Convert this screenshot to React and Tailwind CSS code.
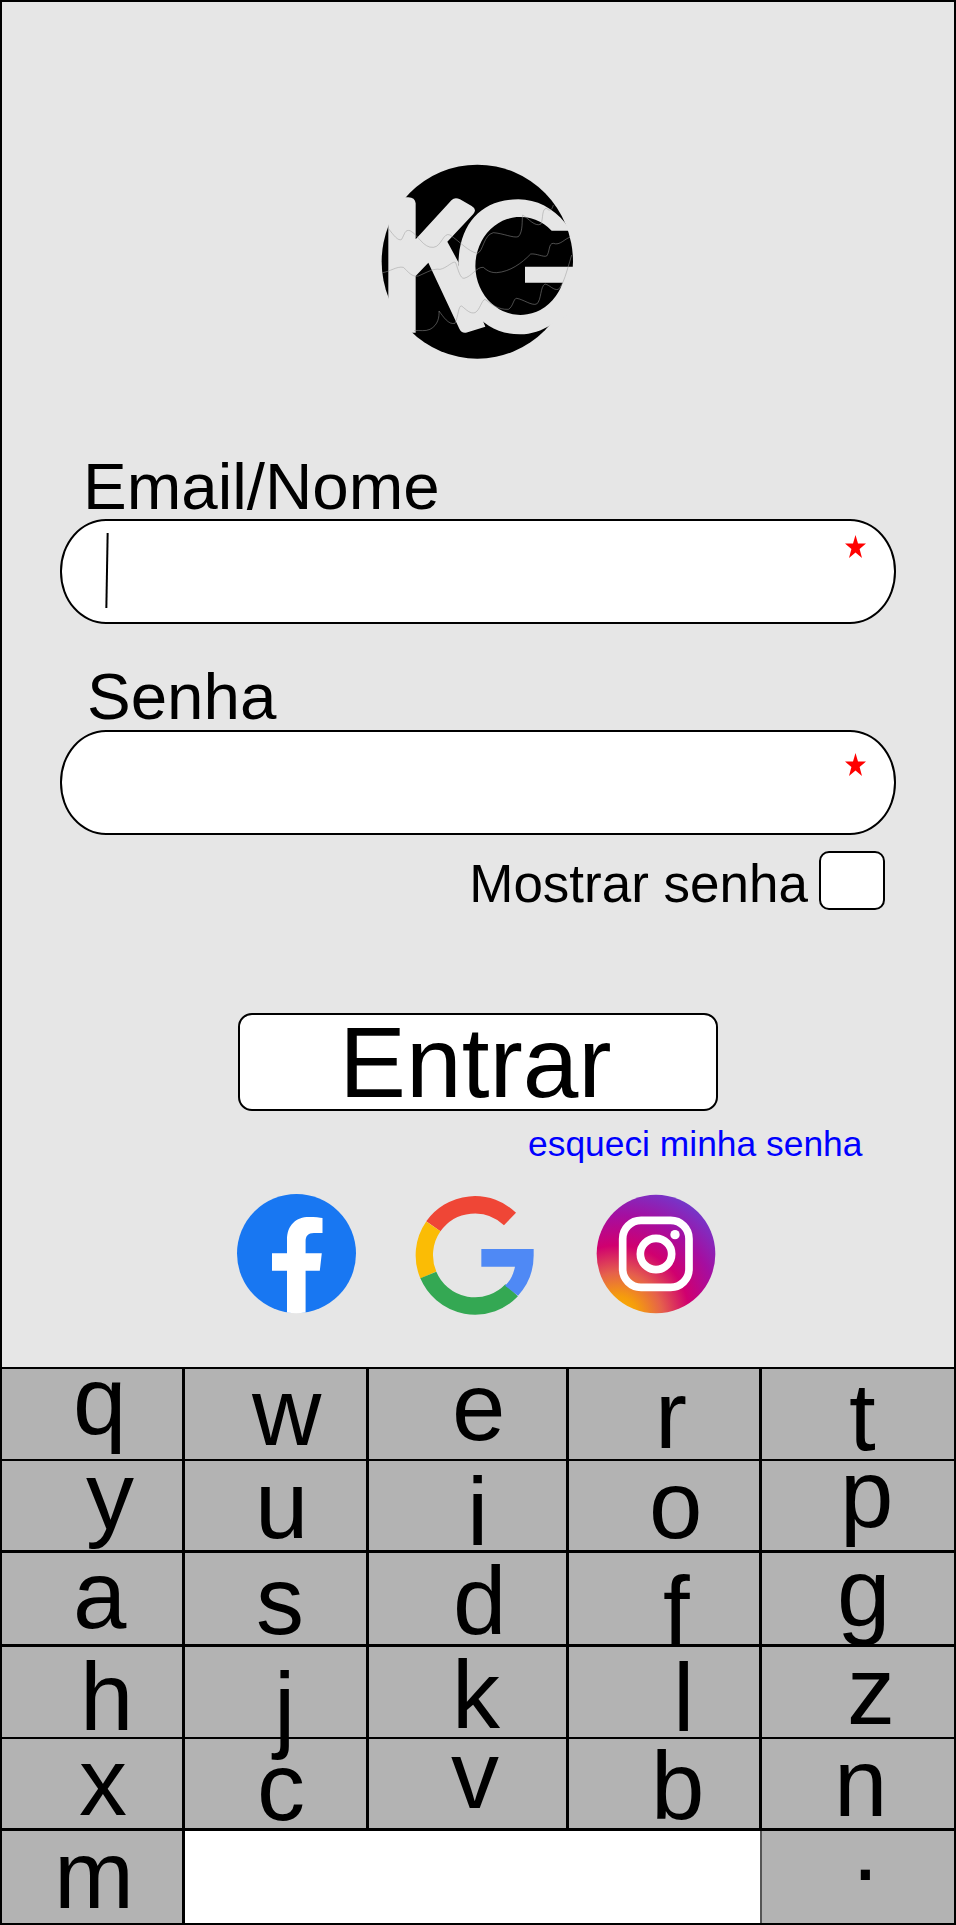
import React from "react";

const keys = [
  [
    { k: "q", c: "ml-[71px] -mt-[16px]" },
    { k: "w", c: "ml-[67px] -mt-[5px]" },
    { k: "e", c: "ml-[83px] -mt-[10px]" },
    { k: "r", c: "ml-[86px] -mt-[2px]" },
    { k: "t", c: "ml-[87px] mt-[0px]" },
  ],
  [
    { k: "y", c: "ml-[84px] -mt-[13px]" },
    { k: "u", c: "ml-[70px] -mt-[4px]" },
    { k: "i", c: "ml-[98px] mt-[3px]" },
    { k: "o", c: "ml-[80px] -mt-[4px]" },
    { k: "p", c: "ml-[78px] -mt-[15px]" },
  ],
  [
    { k: "a", c: "ml-[71px] -mt-[6px]" },
    { k: "s", c: "ml-[71px] mt-[0px]" },
    { k: "d", c: "ml-[84px] mt-[0px]" },
    { k: "f", c: "ml-[94px] mt-[10px]" },
    { k: "g", c: "ml-[75px] -mt-[8px]" },
  ],
  [
    { k: "h", c: "ml-[78px] mt-[2px]" },
    { k: "j", c: "ml-[89px] mt-[12px]" },
    { k: "k", c: "ml-[83px] mt-[0px]" },
    { k: "l", c: "ml-[104px] mt-[3px]" },
    { k: "z", c: "ml-[85px] -mt-[4px]" },
  ],
  [
    { k: "x", c: "ml-[77px] -mt-[5px]" },
    { k: "c", c: "ml-[72px] mt-[0px]" },
    { k: "v", c: "ml-[82px] -mt-[12px]" },
    { k: "b", c: "ml-[82px] -mt-[1px]" },
    { k: "n", c: "ml-[72px] -mt-[4px]" },
  ],
];

const rowLine = [
  "border-b-2",
  "border-b-[3px]",
  "border-b-[3px]",
  "border-b-2",
  "border-b-[3px]",
];

const Star = ({ className }) => (
  <svg viewBox="0 0 21 23" className={className}>
    <polygon points="10.5,0 13,8.6 21,8.6 14.6,14 17,23 10.5,17.6 4,23 6.4,14 0,8.6 8,8.6" fill="#ff0000" />
  </svg>
);

const Logo = () => (
  <svg viewBox="0 0 780 720" className="block w-[260px] h-[240px] ml-[338px]">
    <ellipse cx="412" cy="365" rx="287" ry="291" fill="#000" />
    {/* K */}
    <path
      d="M145,172 H205 Q225,172 227,190 V298 L335,180 Q345,170 360,178 L395,198 Q412,208 400,222 L322,305 L356,368 L355,375 L430,545 L436,560 L378,578 Q364,580 358,566 L265,368 L227,408 V578 H145 Z"
      fill="#e6e6e6"
    />
    {/* G */}
    <path
      d="M675,248 C640,205 590,178 535,178 C420,178 355,255 355,380 C355,490 430,583 540,583 C575,583 605,572 632,555 L720,500 V380 H555 V428 H668 A135 147 0 1 1 635,272 H690 Z"
      fill="#e6e6e6"
    />
    <g fill="none" stroke="#9a9a9a" strokeWidth="1.5">
      <path d="M145,265 C160,285 175,305 185,298 C195,280 195,268 210,272 C235,285 250,325 280,322 C305,320 310,275 330,285 C360,305 385,335 412,340 C430,335 430,285 460,278 C490,280 520,295 535,290 C550,275 545,240 548,225 C565,235 585,262 603,252 C610,235 605,205 620,205 C625,212 635,215 640,195" />
      <path d="M127,398 C150,395 170,378 190,382 C205,395 215,412 235,408 C265,395 280,385 300,388 C320,385 340,360 347,368 C355,390 360,415 372,415 C395,410 410,380 430,382 C445,395 455,398 470,398 C510,395 545,370 572,342 C590,340 610,352 620,348 C630,335 625,310 640,310 C660,318 675,295 690,292" />
      <path d="M222,572 C240,570 255,575 270,568 C295,555 298,530 297,513 C310,530 325,555 345,550 C355,530 355,495 365,498 C380,510 390,522 405,518 C420,510 425,480 435,478 C450,490 475,510 505,508 C520,500 520,475 530,475 C550,478 575,498 590,492 C605,480 600,440 615,432 C630,435 640,452 655,448 C670,435 680,395 695,345" />
    </g>
  </svg>
);

const Facebook = () => (
  <svg viewBox="0 0 120 120" className="block w-[120px] h-[120px]">
    <circle cx="59.5" cy="59.5" r="59.5" fill="#1877f2" />
    <path
      d="M50,118.5 V76.7 H35 V59.3 H50 V46 C50,31 59,23 72,23 C78,23 83,23.6 85.5,24 V39 H77 C71,39 68.6,42 68.6,47 V59.3 H84.8 L82.8,76.7 H68.6 V118.5 Q59,120 50,118.5 Z"
      fill="#fff"
    />
  </svg>
);

const Google = () => (
  <svg viewBox="600 75 366 366" className="block w-[122px] h-[122px]">
    <g fill="none" strokeWidth="52">
      <path d="M888,150 A152 152 0 0 0 658,172" stroke="#ef4636" />
      <path d="M658,172 A152 152 0 0 0 643,318" stroke="#fbbc05" />
      <path d="M643,318 A152 152 0 0 0 893,364" stroke="#34a853" />
    </g>
    <path d="M802,240 H959 V258 A178 178 0 0 1 912,380 L873,350 C890,335 898,315 903,293 H802 Z" fill="#4f89f5" />
  </svg>
);

const Instagram = () => (
  <svg viewBox="1140 75 360 360" className="block w-[120px] h-[120px]">
    <defs>
      <radialGradient id="ig" gradientUnits="userSpaceOnUse" cx="1205" cy="445" r="450">
        <stop offset="0" stopColor="#ffb800" />
        <stop offset="0.14" stopColor="#f59d0c" />
        <stop offset="0.3" stopColor="#e5604c" />
        <stop offset="0.48" stopColor="#d0006f" />
        <stop offset="0.68" stopColor="#a50ea0" />
        <stop offset="0.86" stopColor="#7c30c4" />
        <stop offset="1" stopColor="#4f5bd5" />
      </radialGradient>
    </defs>
    <circle cx="1320" cy="255" r="178" fill="url(#ig)" />
    <rect x="1220" y="154" width="199" height="201" rx="55" fill="none" stroke="#fff" strokeWidth="23" />
    <circle cx="1320" cy="255" r="47" fill="none" stroke="#fff" strokeWidth="23" />
    <circle cx="1377" cy="197" r="14" fill="#fff" />
  </svg>
);

export default function App() {
  return (
    <div className="w-[956px] h-[1925px] flex flex-col border-2 border-black bg-[#e6e6e6] text-black font-['Liberation_Sans',sans-serif] leading-none">
      <div className="h-[1365px] pt-[138px]">
        <Logo />

        <div className="mt-[74px] ml-[81px] text-[65.5px] h-[65px]">Email/Nome</div>
        <div className="relative ml-[58px] w-[836px] h-[105px] rounded-[46px/52px] border-2 border-black bg-white">
          <div className="absolute left-[44px] top-[12px] w-[1.5px] h-[75px] bg-black rotate-[1deg]"></div>
          <Star className="absolute right-[28px] top-[14px] w-[21px] h-[23px]" />
        </div>

        <div className="mt-[40px] ml-[85px] text-[65.5px] h-[66px]">Senha</div>
        <div className="relative ml-[58px] w-[836px] h-[105px] rounded-[46px/52px] border-2 border-black bg-white">
          <Star className="absolute right-[28px] top-[21px] w-[21px] h-[23px]" />
        </div>

        <div className="mt-[16px] mr-[69px] flex justify-end items-start gap-[11px]">
          <span className="mt-[6px] text-[53px]">Mostrar senha</span>
          <div className="w-[66px] h-[59px] rounded-[10px] border-2 border-black bg-white"></div>
        </div>

        <div className="mt-[103px] ml-[236px] w-[480px] h-[98px] rounded-[14px] border-2 border-black bg-white flex items-center justify-center pr-[5px] text-[100px]">
          Entrar
        </div>

        <div className="mt-[16px] ml-[526px] text-[35.4px] text-[#0000ff]">esqueci minha senha</div>

        <div className="mt-[32px] ml-[235px] flex items-start">
          <Facebook />
          <div className="ml-[57px]">
            <Google />
          </div>
          <div className="ml-[60px]">
            <Instagram />
          </div>
        </div>
      </div>

      <div className="flex-1 grid grid-cols-[183px_184px_200px_193px_1fr] grid-rows-[92px_92px_94px_92px_92px_1fr] border-t-2 border-black bg-[#b3b3b3] text-[96px]">
        {keys.map((row, r) =>
          row.map((key, i) => (
            <div
              key={key.k}
              className={(i < 4 ? "border-r-[3px] border-black " : "border-black ") + rowLine[r]}
            >
              <span className={"block " + key.c}>{key.k}</span>
            </div>
          ))
        )}
        <div className="border-r-[3px] border-black">
          <span className="block ml-[52px] -mt-[4px]">m</span>
        </div>
        <div className="col-span-3 bg-white border-r-2 border-[#555]"></div>
        <div>
          <span className="block ml-[90px] -mt-[32px]">.</span>
        </div>
      </div>
    </div>
  );
}
